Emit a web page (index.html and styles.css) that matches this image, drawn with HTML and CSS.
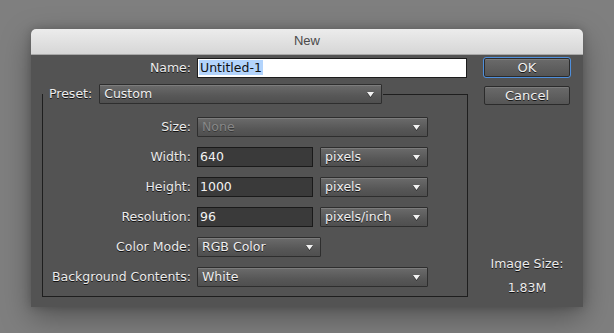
FILE: index.html
```html
<!DOCTYPE html>
<html>
<head>
<meta charset="utf-8">
<title>New</title>
<link rel="stylesheet" href="styles.css">
</head>
<body>
<div class="dialog">
  <div class="titlebar">New</div>
  <div class="content">
    <div class="form">
      <div class="name-row">
        <label class="lbl">Name:</label>
        <div class="name-input"><span class="sel">Untitled-1</span></div>
      </div>
      <fieldset class="group">
        <legend class="legend">
          <span class="lbl">Preset:</span>
          <div class="select w-preset"><span>Custom</span><svg class="arrow" width="7" height="5" viewBox="0 0 7 5"><polygon points="0,0 7,0 3.5,5" fill="#f2f2f2"/></svg></div>
        </legend>
        <div class="rows">
          <label class="lbl">Size:</label>
          <div class="ctl"><div class="select w-full disabled"><span>None</span><svg class="arrow" width="7" height="5" viewBox="0 0 7 5"><polygon points="0,0 7,0 3.5,5" fill="#f2f2f2"/></svg></div></div>

          <label class="lbl">Width:</label>
          <div class="ctl"><div class="field">640</div><div class="select w-unit"><span>pixels</span><svg class="arrow" width="7" height="5" viewBox="0 0 7 5"><polygon points="0,0 7,0 3.5,5" fill="#f2f2f2"/></svg></div></div>

          <label class="lbl">Height:</label>
          <div class="ctl"><div class="field">1000</div><div class="select w-unit"><span>pixels</span><svg class="arrow" width="7" height="5" viewBox="0 0 7 5"><polygon points="0,0 7,0 3.5,5" fill="#f2f2f2"/></svg></div></div>

          <label class="lbl">Resolution:</label>
          <div class="ctl"><div class="field">96</div><div class="select w-unit"><span>pixels/inch</span><svg class="arrow" width="7" height="5" viewBox="0 0 7 5"><polygon points="0,0 7,0 3.5,5" fill="#f2f2f2"/></svg></div></div>

          <label class="lbl">Color Mode:</label>
          <div class="ctl"><div class="select w-mode"><span>RGB Color</span><svg class="arrow" width="7" height="5" viewBox="0 0 7 5"><polygon points="0,0 7,0 3.5,5" fill="#f2f2f2"/></svg></div></div>

          <label class="lbl">Background Contents:</label>
          <div class="ctl"><div class="select w-full"><span>White</span><svg class="arrow" width="7" height="5" viewBox="0 0 7 5"><polygon points="0,0 7,0 3.5,5" fill="#f2f2f2"/></svg></div></div>
        </div>
      </fieldset>
    </div>
    <div class="side">
      <div class="btn default">OK</div>
      <div class="btn">Cancel</div>
      <div class="imgsize">
        <div class="txt">Image Size:</div>
        <div class="txt">1.83M</div>
      </div>
    </div>
  </div>
</div>
</body>
</html>
```

FILE: styles.css
```css
html, body {
  margin: 0;
  padding: 0;
}
body {
  background: #7f7f7f;
  padding: 29px 0 0 31px;
  width: 614px;
  height: 333px;
  box-sizing: border-box;
  overflow: hidden;
  font-family: "DejaVu Sans", "Liberation Sans", sans-serif;
  font-size: 12.5px;
}
.dialog {
  width: 552px;
  height: 278px;
  background: #535353;
  border-radius: 5px 5px 0 0;
  box-shadow: 0 10px 30px rgba(0,0,0,0.35), 0 0 10px rgba(0,0,0,0.2);
  display: flex;
  flex-direction: column;
}
.titlebar {
  height: 25px;
  line-height: 24px;
  border-bottom: 1px solid #a8a8a8;
  border-radius: 5px 5px 0 0;
  background: linear-gradient(#ececec, #d6d6d6);
  text-align: center;
  font-family: "Liberation Sans", "DejaVu Sans", sans-serif;
  font-size: 13px;
  color: #4a4a4a;
}
.content {
  flex: 1;
  display: flex;
}
.form {
  width: 437px;
  padding-top: 3px;
}
.lbl {
  color: #ececec;
  text-shadow: 0 1px 0 rgba(0,0,0,0.8);
  text-align: right;
  line-height: 20px;
  white-space: nowrap;
}
.name-row {
  display: grid;
  grid-template-columns: 160px 270px;
  column-gap: 6px;
  height: 20px;
  margin-bottom: 6px;
}
.name-input {
  background: #fff;
  border: 1px solid #1c1c1c;
  height: 18px;
  line-height: 18px;
  padding-left: 1px;
  color: #111;
}
.sel {
  background: #b3d4fc;
  display: inline-block;
  line-height: 15px;
  padding: 0 1px;
}
.group {
  margin: 0 0 0 11px;
  padding: 13px 0 9px 0;
  width: 426px;
  box-sizing: border-box;
  border: 1px solid #1e1e1e;
  min-width: 0;
}
.legend {
  display: flex;
  align-items: center;
  gap: 7px;
  padding: 0 1px 0 6px;
  margin-left: 0;
  height: 20px;
}
.rows {
  display: grid;
  grid-template-columns: 148px 1fr;
  column-gap: 6px;
  row-gap: 10px;
  grid-auto-rows: 20px;
}
.ctl {
  display: flex;
  gap: 7px;
}
.select {
  box-sizing: border-box;
  height: 20px;
  border: 1px solid #2e2e2e;
  border-radius: 1px;
  background: linear-gradient(#6b6b6b, #575757 60%, #4f4f4f);
  box-shadow: inset 0 1px 0 rgba(255,255,255,0.12);
  color: #f0f0f0;
  text-shadow: 0 1px 0 rgba(0,0,0,0.7);
  display: flex;
  align-items: center;
  justify-content: space-between;
  padding: 0 7px 0 4px;
  line-height: 18px;
}
.select.disabled {
  color: #878787;
  text-shadow: 0 1px 0 rgba(0,0,0,0.35);
}
.arrow {
  display: block;
  filter: drop-shadow(0 1px 0 rgba(0,0,0,0.5));
}
.w-preset { width: 283px; }
.w-full { width: 231px; }
.w-unit { width: 108px; }
.w-mode { width: 124px; }
.field {
  box-sizing: border-box;
  width: 116px;
  height: 20px;
  background: #3a3a3a;
  border: 1px solid #1a1a1a;
  color: #f2f2f2;
  padding-left: 2px;
  line-height: 18px;
}
.side {
  width: 88px;
  margin-left: 15px;
  padding-top: 3px;
  display: flex;
  flex-direction: column;
  align-items: center;
}
.btn {
  box-sizing: border-box;
  width: 86px;
  height: 19px;
  border: 1px solid #2b2b2b;
  border-radius: 2px;
  background: linear-gradient(#6a6a6a, #555555);
  box-shadow: inset 0 1px 0 rgba(255,255,255,0.12);
  color: #f0f0f0;
  text-shadow: 0 1px 0 rgba(0,0,0,0.75);
  text-align: center;
  line-height: 17px;
  font-size: 13px;
}
.btn.default {
  outline: 1px solid #4f8fdc;
  margin-bottom: 9px;
}
.imgsize {
  margin-top: auto;
  padding-bottom: 11px;
  display: flex;
  flex-direction: column;
  gap: 8px;
  align-items: center;
}
.txt {
  color: #ececec;
  text-shadow: 0 1px 0 rgba(0,0,0,0.8);
  line-height: 16px;
}
```
